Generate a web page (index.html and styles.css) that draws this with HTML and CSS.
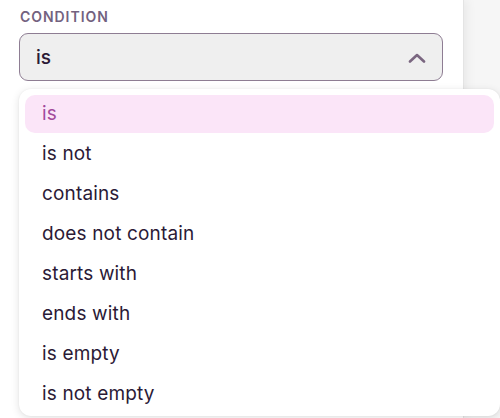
FILE: index.html
```html
<!DOCTYPE html>
<html>
<head>
<meta charset="utf-8">
<link rel="stylesheet" href="styles.css">
</head>
<body>
<div class="panel">
  <div class="label">CONDITION</div>
  <div class="select">
    <span class="value">is</span>
    <svg class="chev" width="18" height="10" viewBox="0 0 18 10"><path d="M2 8.5 L9 2 L16 8.5" fill="none" stroke="#7a6680" stroke-width="2.6" stroke-linecap="round" stroke-linejoin="round"/></svg>
  </div>
</div>
<div class="menu">
  <div class="item active">is</div>
  <div class="item">is not</div>
  <div class="item">contains</div>
  <div class="item">does not contain</div>
  <div class="item">starts with</div>
  <div class="item">ends with</div>
  <div class="item">is empty</div>
  <div class="item">is not empty</div>
</div>
</body>
</html>
```
FILE: styles.css
```css
html, body {
  margin: 0;
  padding: 0;
  height: 100%;
  overflow: hidden;
}
body {
  background: #f6f6f6;
  font-family: Inter, "Noto Sans", sans-serif;
  position: relative;
}
.panel {
  width: 464px;
  height: 100%;
  background: #ffffff;
  border-right: 1px solid #e4e4e4;
  box-shadow: 3px 0 10px rgba(0,0,0,0.06);
  box-sizing: border-box;
  padding: 8px 20px 0 19px;
}
.label {
  font-size: 14px;
  font-weight: 600;
  letter-spacing: 0.95px;
  color: #73627f;
  line-height: 17px;
  padding-left: 1px;
}
.select {
  margin-top: 8px;
  height: 48px;
  box-sizing: border-box;
  border: 1.3px solid #8e7d93;
  border-radius: 9px;
  background: #efefef;
  display: flex;
  align-items: center;
  justify-content: space-between;
  padding: 0 16px 0 16px;
}
.value {
  font-size: 19px;
  color: #2b1a36;
  font-weight: 500;
}
.chev {
  margin-top: 2px;
}
.menu {
  position: absolute;
  left: 19px;
  top: 89px;
  width: 481px;
  height: 327px;
  box-sizing: border-box;
  background: #ffffff;
  border-radius: 12px;
  box-shadow: 0 2px 8px rgba(0,0,0,0.12), 0 0 2px rgba(0,0,0,0.06);
  padding: 6px 6px 3px 6px;
  display: flex;
  flex-direction: column;
  gap: 2px;
}
.item {
  height: 38px;
  flex: none;
  display: flex;
  align-items: center;
  padding-left: 17px;
  padding-bottom: 2px;
  box-sizing: border-box;
  font-size: 19px;
  letter-spacing: 0.15px;
  color: #2b1a36;
  border-radius: 10px;
}
.item.active {
  background: #fbe5f8;
  color: #a24a9c;
}
```
